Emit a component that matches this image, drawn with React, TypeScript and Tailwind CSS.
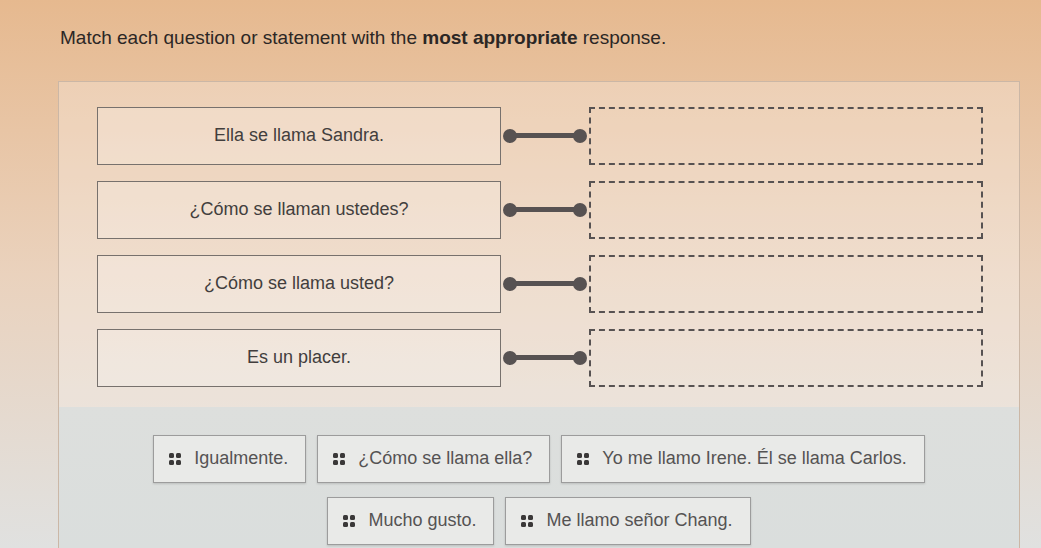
import { Fragment } from "react";

const prompts = [
	"Ella se llama Sandra.",
	"¿Cómo se llaman ustedes?",
	"¿Cómo se llama usted?",
	"Es un placer.",
];

const answerRows = [
	["Igualmente.", "¿Cómo se llama ella?", "Yo me llamo Irene. Él se llama Carlos."],
	["Mucho gusto.", "Me llamo señor Chang."],
];

function GripDots() {
	return (
		<span className="grid grid-cols-2 gap-[2px] shrink-0">
			<span className="h-[5px] w-[5px] rounded-[1.5px] bg-[#3a3838]" />
			<span className="h-[5px] w-[5px] rounded-[1.5px] bg-[#3a3838]" />
			<span className="h-[5px] w-[5px] rounded-[1.5px] bg-[#3a3838]" />
			<span className="h-[5px] w-[5px] rounded-[1.5px] bg-[#3a3838]" />
		</span>
	);
}

function Connector() {
	return (
		<div className="flex items-center w-[88px] px-[2px]">
			<span className="h-[14px] w-[14px] rounded-full bg-[#575252] shrink-0" />
			<span className="h-[5px] flex-1 -mx-[2px] bg-[#575252]" />
			<span className="h-[14px] w-[14px] rounded-full bg-[#575252] shrink-0" />
		</div>
	);
}

function AnswerChip({ label }: { label: string }) {
	return (
		<div className="flex items-center gap-[13px] h-[48px] pl-[15px] pr-[17px] bg-[#e9eae8] border border-[#9c9c9c] shadow-[0_1px_2px_rgba(0,0,0,0.15)]">
			<GripDots />
			<span className="text-[18px] text-[#555353]">{label}</span>
		</div>
	);
}

export default function App() {
	return (
		<div className="w-[1041px] h-[548px] overflow-hidden bg-linear-to-b from-[#e6b98f] via-[#ead2bd] to-[#e0e1e0] font-['Liberation_Sans',Arial,sans-serif]">
			<p className="pl-[60px] pt-[24px] text-[19px] text-[#2c2725]">
				Match each question or statement with the{" "}
				<span className="font-bold">most appropriate</span> response.
			</p>

			<div className="ml-[58px] mt-[28px] w-[962px] h-[470px] flex flex-col border-t border-l border-r border-[#cbb7a6] bg-white/25">
				<div className="grid grid-cols-[auto_auto_auto] items-center justify-start gap-y-[16px] pl-[38px] pt-[25px] pb-[20px]">
					{prompts.map((text) => (
						<Fragment key={text}>
							<div className="w-[404px] h-[58px] flex items-center justify-center border border-[#77716d] bg-white/20 text-[18px] text-[#423e3d]">
								{text}
							</div>
							<Connector />
							<div className="w-[394px] h-[58px] border-2 border-dashed border-[#575252]" />
						</Fragment>
					))}
				</div>

				<div className="flex-1 flex flex-col items-center gap-[14px] pt-[28px] bg-linear-to-b from-[#dddfdd] to-[#dadedd]">
					{answerRows.map((row, i) => (
						<div key={i} className="flex gap-[11px]">
							{row.map((label) => (
								<AnswerChip key={label} label={label} />
							))}
						</div>
					))}
				</div>
			</div>
		</div>
	);
}
